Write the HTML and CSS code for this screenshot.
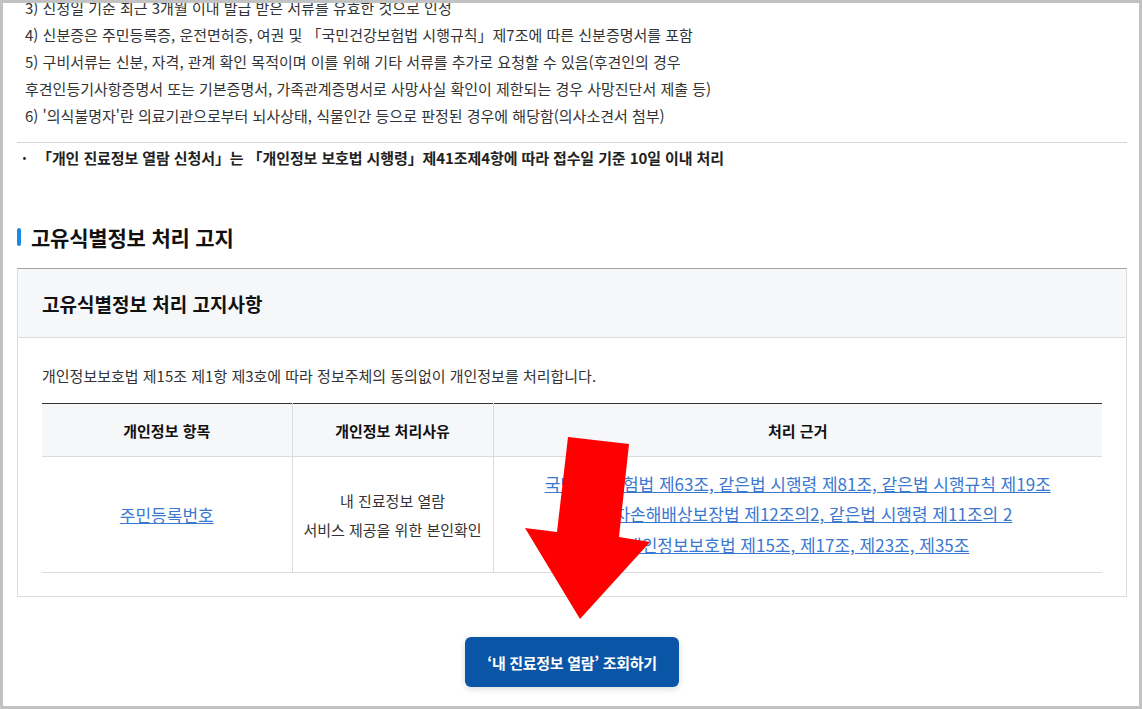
FILE: index.html
```html
<!DOCTYPE html>
<html lang="ko">
<head>
  <meta charset="UTF-8" />
  <meta name="viewport" content="width=device-width, initial-scale=1.0"/>
  <title>내 진료정보 열람</title>
  <link rel="stylesheet" href="styles.css">
</head>
<body>
  <div class="frame">
    <div class="content">
      <ul class="notes">
        <li>3) 신청일 기준 최근 3개월 이내 발급 받은 서류를 유효한 것으로 인정</li>
        <li>4) 신분증은 주민등록증, 운전면허증, 여권 및 「국민건강보험법 시행규칙」제7조에 따른 신분증명서를 포함</li>
        <li>5) 구비서류는 신분, 자격, 관계 확인 목적이며 이를 위해 기타 서류를 추가로 요청할 수 있음(후견인의 경우</li>
        <li>후견인등기사항증명서 또는 기본증명서, 가족관계증명서로 사망사실 확인이 제한되는 경우 사망진단서 제출 등)</li>
        <li>6) '의식불명자'란 의료기관으로부터 뇌사상태, 식물인간 등으로 판정된 경우에 해당함(의사소견서 첨부)</li>
      </ul>

      <p class="process-note"><span class="dot">·</span>「개인 진료정보 열람 신청서」는 「개인정보 보호법 시행령」제41조제4항에 따라 접수일 기준 10일 이내 처리</p>

      <h3 class="section-title">고유식별정보 처리 고지</h3>

      <div class="notice-box">
        <div class="notice-head">고유식별정보 처리 고지사항</div>
        <div class="notice-body">
          <p class="notice-desc">개인정보보호법 제15조 제1항 제3호에 따라 정보주체의 동의없이 개인정보를 처리합니다.</p>
          <table class="info-table">
            <colgroup>
              <col class="col-item">
              <col class="col-reason">
              <col>
            </colgroup>
            <thead>
              <tr>
                <th>개인정보 항목</th>
                <th>개인정보 처리사유</th>
                <th>처리 근거</th>
              </tr>
            </thead>
            <tbody>
              <tr>
                <td><a href="#" class="link">주민등록번호</a></td>
                <td class="reason">내 진료정보 열람<br>서비스 제공을 위한 본인확인</td>
                <td class="laws">
                  <a href="#" class="link">국민건강보험법 제63조, 같은법 시행령 제81조, 같은법 시행규칙 제19조</a><br>
                  <a href="#" class="link">자동차손해배상보장법 제12조의2, 같은법 시행령 제11조의 2</a><br>
                  <a href="#" class="link">개인정보보호법 제15조, 제17조, 제23조, 제35조</a>
                </td>
              </tr>
            </tbody>
          </table>
        </div>
      </div>

      <div class="actions">
        <button class="view-btn">‘내 진료정보 열람’ 조회하기</button>
      </div>
    </div>
  </div>

  <!-- red annotation arrow -->
  <svg class="arrow" width="1142" height="709" viewBox="0 0 1142 709">
    <polygon points="568,437 629,444 619,537 650,542 580,619 525,528 557,532" fill="#ff0000"/>
  </svg>
</body>
</html>
```

FILE: styles.css
```css
* {
  margin: 0;
  padding: 0;
  box-sizing: border-box;
}

body {
  position: relative;
  font-family: "Noto Sans CJK KR", "Noto Sans", sans-serif;
  color: #333;
  background: #fff;
}

.frame {
  height: 709px;
  border: 3px solid #c2c2c2;
  overflow: hidden;
  background: #fff;
}

.content {
  margin-top: -9px;
  padding: 0 12px 0 14px;
}

.notes {
  list-style: none;
  padding-left: 8px;
  font-size: 15px;
  line-height: 27px;
  color: #333;
}

.process-note {
  margin-top: 13px;
  border-top: 1px solid #d5d5d5;
  padding-top: 3px;
  padding-left: 5px;
  font-size: 15px;
  line-height: 24px;
  font-weight: 700;
  color: #222;
  letter-spacing: -0.1px;
}

.process-note .dot {
  display: inline-block;
  width: 15px;
}

.section-title {
  display: flex;
  align-items: center;
  gap: 10px;
  margin-top: 53px;
  font-size: 21px;
  line-height: 28px;
  font-weight: 700;
  color: #111;
  letter-spacing: -0.2px;
}

.section-title::before {
  content: "";
  width: 4px;
  height: 18px;
  border-radius: 2px;
  background: #1a8ae6;
}

.notice-box {
  margin-top: 17px;
  border: 1px solid #dcdcdc;
  border-top-color: #a5a5a5;
}

.notice-head {
  height: 69px;
  display: flex;
  align-items: center;
  padding-left: 24px;
  background: #f6f7f9;
  border-bottom: 1px solid #dcdcdc;
  font-size: 19px;
  font-weight: 700;
  color: #111;
}

.notice-body {
  padding: 28px 24px 23px;
}

.notice-desc {
  font-size: 15px;
  line-height: 20px;
  color: #333;
}

.info-table {
  width: 100%;
  margin-top: 17px;
  border-collapse: collapse;
  table-layout: fixed;
  border-top: 1px solid #333;
}

.col-item {
  width: 250px;
}

.col-reason {
  width: 201px;
}

.info-table th {
  height: 53px;
  background: #f6f7f9;
  font-size: 15px;
  font-weight: 700;
  color: #111;
  border-bottom: 1px solid #dcdcdc;
  border-left: 1px solid #dcdcdc;
}

.info-table td {
  height: 116px;
  text-align: center;
  font-size: 15px;
  border-bottom: 1px solid #dcdcdc;
  border-left: 1px solid #dcdcdc;
}

.info-table th:first-child,
.info-table td:first-child {
  border-left: none;
}

.info-table td:first-child {
  font-size: 17px;
}

.reason {
  line-height: 29px;
  color: #333;
}

.info-table td.laws {
  font-size: 17px;
  line-height: 30.5px;
}

.link {
  color: #3a78d0;
  text-decoration: underline;
}

.actions {
  display: flex;
  justify-content: center;
  margin-top: 40px;
}

.view-btn {
  width: 214px;
  height: 50px;
  border: none;
  border-radius: 6px;
  background: #0b55a6;
  color: #fff;
  font-family: inherit;
  font-size: 15px;
  font-weight: 700;
  letter-spacing: -0.3px;
  box-shadow: 0 2px 6px rgba(0, 0, 0, 0.15);
  cursor: pointer;
}

.arrow {
  position: absolute;
  top: 0;
  left: 0;
  pointer-events: none;
}
```
